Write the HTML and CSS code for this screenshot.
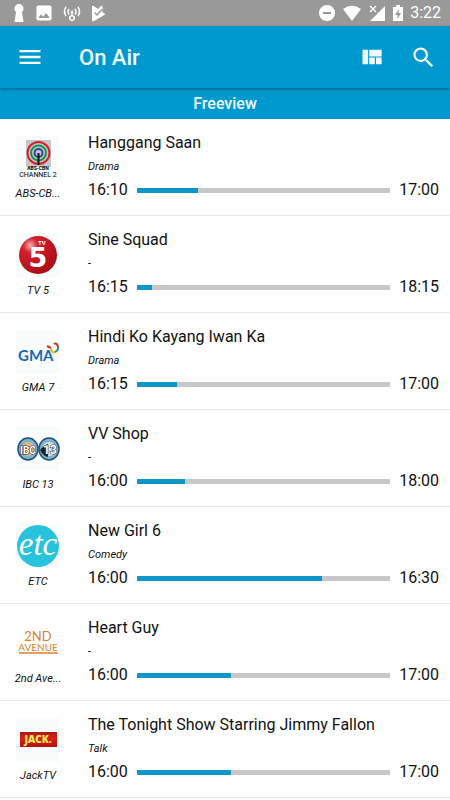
FILE: index.html
```html
<!DOCTYPE html>
<html lang="en">
<head>
    <meta charset="UTF-8">
    <meta name="viewport" content="width=device-width, initial-scale=1.0">
    <title>On Air</title>
    <link rel="stylesheet" href="styles.css">
</head>
<body>
    <div class="statusbar">
        <div class="status-left">
            <svg width="12" height="20" viewBox="0 0 12 20"><path d="M6 1a4.600 4.600 0 0 0-3 8L1.500 19h9L9 9a4.600 4.600 0 0 0-3-8z"/></svg>
            <svg width="20" height="20" viewBox="0 0 24 24"><path d="M21 19V5c0-1.100-.9-2-2-2H5c-1.100 0-2 .9-2 2v14c0 1.100.9 2 2 2h14c1.100 0 2-.9 2-2zM8.500 13.500l2.500 3.010L14.500 12l4.500 6H5l3.500-4.500z"/></svg>
            <svg width="18" height="20" viewBox="0 0 18 20"><g fill="none" stroke="#fff" stroke-width="1.500"><path d="M3 4Q0 8.500 3 13M6 6Q4 8.500 6 11.500M15 4q3 4.500 0 9M12 6q2 3 0 5.500M9 9v4"/><circle cx="9" cy="15" r="2.300"/></g><circle cx="9" cy="9" r="1.500"/></svg>
            <svg width="16" height="20" viewBox="0 0 16 20"><path d="M2 4q0-2 2-1l4 3 4-4 1 5-1 2 2.500 1.400q1 .8 0 1.500L4 18q-2 1-2-1z"/><path d="M4.500 9.500L7 12l5.500-6" fill="none" stroke="#999" stroke-width="1.500"/></svg>
        </div>
        <div class="status-right">
            <svg width="18" height="18" viewBox="0 0 18 18"><path d="M9 1a8 8 0 1 0 0 16A8 8 0 0 0 9 1zm4 9H5V8h8z"/></svg>
            <svg width="20" height="18" viewBox="0 0 20 18"><path d="M10 17L1 5q9-6.500 18 0z"/></svg>
            <svg width="18" height="18" viewBox="0 0 18 18"><path d="M17 2v15H2l6-6h1V9h1z"/><path d="M2 2l6 6M8 2L2 8" stroke="#fff" stroke-width="1.300"/></svg>
            <svg width="12" height="18" viewBox="0 0 12 18"><path d="M4 1h4v2h3v14H1V3h3zm3 4L3 11h2.500v4L9 9H6.500z" fill-rule="evenodd"/></svg>
            <span class="clock">3:22</span>
        </div>
    </div><!-- statusbar -->

    <header class="appbar">
        <button class="icon-btn" aria-label="Menu">
            <svg width="28" height="28" viewBox="0 0 24 24"><path d="M3 18h18v-2H3v2zm0-5h18v-2H3v2zm0-7v2h18V6H3z"/></svg>
        </button>
        <h1>On Air</h1>
        <button class="icon-btn" aria-label="Grid view">
            <svg width="27" height="27" viewBox="0 0 24 24"><path d="M10 18h5v-6h-5v6zm-6 0h5V5H4v13zm12 0h5v-6h-5v6zM10 5v6h11V5H10z"/></svg>
        </button>
        <button class="icon-btn" aria-label="Search">
            <svg width="27" height="27" viewBox="0 0 24 24"><path d="M15.500 14h-.79l-.28-.27A6.471 6.471 0 0 0 16 9.500 6.500 6.500 0 1 0 9.500 16c1.610 0 3.090-.59 4.230-1.570l.27.28v.79l5 4.990L20.490 19l-4.990-5zm-6 0C7.010 14 5 11.990 5 9.500S7.010 5 9.500 5 14 7.010 14 9.500 11.990 14 9.500 14z"/></svg>
        </button>
    </header>

    <h2 class="section">Freeview</h2>

    <ul class="guide">
        <li class="row">
            <div class="channel">
                <svg class="logo" viewBox="0 0 44 44">
                    <path d="M10 4h25v27H10z" fill="#c5c7ca"/>
                    <g fill="none" stroke-width="2">
                        <circle cx="22.500" cy="17" r="11" stroke="#d5202b"/>
                        <circle cx="22.500" cy="17" r="7.500" stroke="#169455"/>
                        <circle cx="22.500" cy="17" r="4" stroke="#26469c"/>
                        <path d="M22.500 17v12" stroke="#111"/>
                    </g>
                    <text x="22" y="34" font-size="5" font-weight="bold" text-anchor="middle">ABS-CBN</text>
                    <text x="22" y="41" font-size="7" text-anchor="middle">CHANNEL 2</text>
                </svg>
                <span class="name">ABS-CB...</span>
            </div>
            <div class="show">
                <h3>Hanggang Saan</h3>
                <p class="genre">Drama</p>
                <div class="time"><span>16:10</span><div class="bar"><div class="fill" style="width: 24%"></div></div><span>17:00</span></div>
            </div>
        </li>
        <li class="row">
            <div class="channel">
                <svg class="logo" viewBox="0 0 44 44">
                    <defs><radialGradient id="red" cx=".3" cy=".25" r=".8"><stop offset="0" stop-color="#f3b0ae"/><stop offset=".25" stop-color="#d3202b"/><stop offset="1" stop-color="#a90c18"/></radialGradient></defs>
                    <circle cx="22" cy="22" r="19" fill="url(#red)"/>
                    <text x="22" y="12" font-size="6" font-weight="bold" fill="#fff">TV</text>
                    <text class="five" x="22" y="34" font-size="27" font-weight="bold" fill="#fff" text-anchor="middle">5</text>
                </svg>
                <span class="name">TV 5</span>
            </div>
            <div class="show">
                <h3>Sine Squad</h3>
                <p class="genre">-</p>
                <div class="time"><span>16:15</span><div class="bar"><div class="fill" style="width: 6%"></div></div><span>18:15</span></div>
            </div>
        </li>
        <li class="row">
            <div class="channel">
                <svg class="logo" viewBox="0 0 44 44">
                    <text class="gma" x="2" y="31" font-size="15" font-weight="bold" fill="#1768b3">GMA</text>
                    <g fill="none" stroke-width="2">
                        <path d="M31 16l4 2" stroke="#d9322b"/>
                        <path d="M35 18q0 5 4 4" stroke="#f0b323"/>
                        <path d="M39 22q4-2 3-6" stroke="#2a9b62"/>
                        <path d="M42 17q-1-5-4-3" stroke="#c92e36"/>
                    </g>
                </svg>
                <span class="name">GMA 7</span>
            </div>
            <div class="show">
                <h3>Hindi Ko Kayang Iwan Ka</h3>
                <p class="genre">Drama</p>
                <div class="time"><span>16:15</span><div class="bar"><div class="fill" style="width: 16%"></div></div><span>17:00</span></div>
            </div>
        </li>
        <li class="row">
            <div class="channel">
                <svg class="logo" viewBox="0 0 44 44">
                    <g stroke="#254f7c" stroke-width="1.500">
                        <ellipse cx="12" cy="22" rx="10" ry="11" fill="#78b5ce"/>
                        <ellipse cx="33" cy="22" rx="10" ry="11" fill="#78b5ce"/>
                    </g>
                    <circle cx="12" cy="22" r="7" fill="#e3b288"/>
                    <circle cx="33" cy="22" r="7" fill="#e9dccb"/>
                    <path d="M24 23q4-5 8-6v13q-5-1-8-7z" fill="#222"/>
                    <text class="ibc" x="12" y="27" font-size="10" text-anchor="middle">IBC</text>
                    <text class="ibc" x="34" y="27" font-size="12" text-anchor="middle">13</text>
                </svg>
                <span class="name">IBC 13</span>
            </div>
            <div class="show">
                <h3>VV Shop</h3>
                <p class="genre">-</p>
                <div class="time"><span>16:00</span><div class="bar"><div class="fill" style="width: 19%"></div></div><span>18:00</span></div>
            </div>
        </li>
        <li class="row">
            <div class="channel">
                <svg class="logo" viewBox="0 0 44 44">
                    <circle cx="22" cy="22" r="21" fill="#27c3dc"/>
                    <text class="etc" x="22" y="31" font-size="33" text-anchor="middle">etc</text>
                </svg>
                <span class="name">ETC</span>
            </div>
            <div class="show">
                <h3>New Girl 6</h3>
                <p class="genre">Comedy</p>
                <div class="time"><span>16:00</span><div class="bar"><div class="fill" style="width: 73%"></div></div><span>16:30</span></div>
            </div>
        </li>
        <li class="row">
            <div class="channel">
                <svg class="logo plain" viewBox="0 0 44 44">
                    <g class="avenue" text-anchor="middle">
                        <text x="22" y="20" font-size="13">2ND</text>
                        <text x="22" y="30" font-size="10">AVENUE</text>
                    </g>
                    <path d="M3 32h39" stroke="#d98030" stroke-width="1.500"/>
                </svg>
                <span class="name">2nd Ave...</span>
            </div>
            <div class="show">
                <h3>Heart Guy</h3>
                <p class="genre">-</p>
                <div class="time"><span>16:00</span><div class="bar"><div class="fill" style="width: 37%"></div></div><span>17:00</span></div>
            </div>
        </li>
        <li class="row">
            <div class="channel">
                <svg class="logo" viewBox="0 0 44 44">
                    <defs><linearGradient id="jack" x1="0" y1="0" x2="0" y2="1"><stop offset="0" stop-color="#a51a12"/><stop offset=".4" stop-color="#df1d18"/><stop offset="1" stop-color="#b40f10"/></linearGradient></defs>
                    <path d="M4 14h37v15H4z" fill="url(#jack)"/>
                    <text class="jack" x="22" y="25" font-size="10" text-anchor="middle">JACK.</text>
                </svg>
                <span class="name">JackTV</span>
            </div>
            <div class="show">
                <h3>The Tonight Show Starring Jimmy Fallon</h3>
                <p class="genre">Talk</p>
                <div class="time"><span>16:00</span><div class="bar"><div class="fill" style="width: 37%"></div></div><span>17:00</span></div>
            </div>
        </li>
    </ul><!-- guide -->
</body>
</html>
```
FILE: styles.css
```css
*{margin: 0;padding: 0;box-sizing: border-box;}

body{
    background: #fff;
    color: #111;
    font-family: Roboto, "Liberation Sans", sans-serif;
}

ul, li{
    list-style: none;
}

svg{
    display: block;
    flex-shrink: 0;
}

/* status bar */
.statusbar{
    display: flex;
    justify-content: space-between;
    align-items: center;
    height: 26px;
    padding: 0 9px 0 13px;
    background: #999;
    color: #fff;
}

.statusbar svg{
    fill: #fff;
}

.status-left, .status-right{
    display: flex;
    align-items: center;
}

.status-left{
    gap: 9px;
}

.status-right{
    gap: 6px;
}

.clock{
    font-size: 16px;
    line-height: 26px;
}

/* app bar */
.appbar{
    position: relative;
    display: flex;
    align-items: center;
    height: 62px;
    padding: 0 13px 0 16px;
    background: #0099cf;
    box-shadow: 0 1px 3px rgba(0, 0, 0, .4);
}

.appbar h1{
    flex: 1;
    padding-left: 35px;
    color: #f0fcff;
    font-size: 22px;
    font-weight: 500;
}

.icon-btn{
    border: 0;
    background: none;
    cursor: pointer;
}

.icon-btn svg{
    fill: #f0fcff;
}

.icon-btn + .icon-btn{
    margin-left: 25px;
}

.section{
    background: #0099cf;
    color: #f0fcff;
    font-size: 16px;
    font-weight: 500;
    line-height: 31px;
    text-align: center;
}

/* programme list */
.row{
    display: flex;
    height: 97px;
    padding: 12px 11px 0 12px;
    border-bottom: 1px solid #e6e6e6;
}

.channel{
    width: 52px;
    padding-top: 5px;
    text-align: center;
}

.logo{
    width: 44px;
    height: 44px;
    margin: 0 auto;
    background: #f8fcfa;
}

.logo.plain{
    background: none;
}

.name{
    display: block;
    padding-top: 5px;
    font-size: 11px;
    font-style: italic;
    line-height: 18px;
    white-space: nowrap;
}

.show{
    flex: 1;
    min-width: 0;
    padding-left: 24px;
}

.show h3{
    font-size: 16px;
    font-weight: 400;
    line-height: 24px;
    white-space: nowrap;
    overflow: hidden;
    text-overflow: ellipsis;
}

.genre{
    font-size: 11px;
    font-style: italic;
    line-height: 24px;
}

.time{
    display: flex;
    align-items: center;
    gap: 9px;
    font-size: 16px;
    line-height: 22px;
}

.bar{
    flex: 1;
    height: 5px;
    background: #c8c8c8;
}

.fill{
    height: 100%;
    background: #0e96c8;
}

/* logo lettering */
.five{
    font-family: "DejaVu Sans", sans-serif;
}

.gma{
    font-family: Lato, sans-serif;
}

.ibc{
    fill: #fff;
    stroke: #222;
    stroke-width: 1;
    paint-order: stroke;
    font-weight: 700;
}

.etc{
    fill: #fff;
    font-family: "Liberation Serif", serif;
    font-style: italic;
}

.avenue{
    fill: #d98030;
    font-family: Lato, sans-serif;
}

.jack{
    fill: #ffe95c;
    font-family: "Open Sans", sans-serif;
    font-weight: 800;
}
```
